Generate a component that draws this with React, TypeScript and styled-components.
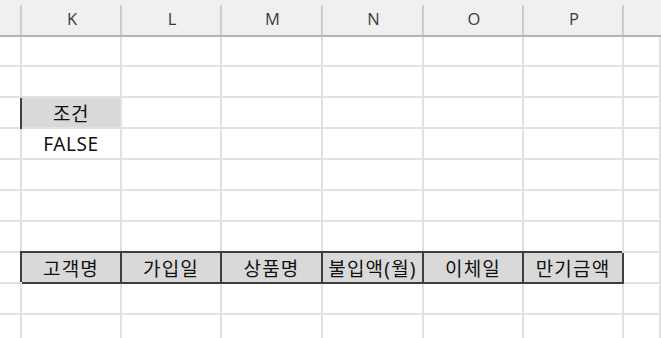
import React from "react";
import styled, { createGlobalStyle, css } from "styled-components";

const GlobalStyle = createGlobalStyle`
  html, body {
    margin: 0;
    padding: 0;
    background: #ffffff;
    overflow: hidden;
  }
  #root {
    width: 661px;
    height: 338px;
    overflow: hidden;
  }
`;

const COLS = ["", "K", "L", "M", "N", "O", "P", ""];
const GRID = "#e1e1e1";
const DARK = "#3f3f3f";
const FILL = "#d9d9d9";

const Sheet = styled.div`
  display: grid;
  grid-template-columns: 22px 100px 100px 101px 101px 100px 100px 1fr;
  grid-template-rows: 37px 30px repeat(9, 31px);
  width: 661px;
  font-family: "Noto Sans", "Noto Sans CJK KR", sans-serif;
`;

const ColHeader = styled.div<{ $edge?: boolean }>`
  position: relative;
  display: flex;
  align-items: center;
  justify-content: center;
  background: #f0f0f0;
  border-bottom: 2px solid #b4b4b4;
  color: #3a3a3a;
  font-family: "Open Sans", "Noto Sans", sans-serif;
  font-size: 16.5px;
  padding-top: 1px;
  &::after {
    content: "";
    position: absolute;
    right: 0;
    top: 5px;
    bottom: 0;
    width: 2px;
    background: linear-gradient(to right, #c2c2c2, #d6d6d6);
    display: ${(p) => (p.$edge ? "none" : "block")};
  }
`;

type Tone = "plain" | "label" | "head";

const Cell = styled.div<{ $tone: Tone }>`
  display: flex;
  align-items: center;
  justify-content: center;
  border-right: 2px solid ${GRID};
  border-bottom: 2px solid ${GRID};
  color: #111111;
  font-size: 19px;
  letter-spacing: 0.6px;
  white-space: nowrap;
  overflow: visible;
  ${(p) =>
    p.$tone === "label" &&
    css`
      background: ${FILL};
      box-shadow: -2px 0 0 ${DARK};
    `}
  ${(p) =>
    p.$tone === "head" &&
    css`
      background: ${FILL};
      letter-spacing: 1.2px;
      border-right-color: ${DARK};
      border-bottom-color: ${DARK};
      box-shadow: -2px -2px 0 ${DARK};
    `}
`;

type CellData = { text: string; tone: Tone };

const rows: Record<number, Record<number, CellData>> = {
  2: { 1: { text: "조건", tone: "label" } },
  3: { 1: { text: "FALSE", tone: "plain" } },
  7: {
    1: { text: "고객명", tone: "head" },
    2: { text: "가입일", tone: "head" },
    3: { text: "상품명", tone: "head" },
    4: { text: "불입액(월)", tone: "head" },
    5: { text: "이체일", tone: "head" },
    6: { text: "만기금액", tone: "head" },
  },
};

export default function App() {
  const body: React.ReactNode[] = [];
  for (let r = 0; r < 10; r++) {
    for (let c = 0; c < COLS.length; c++) {
      const d = rows[r]?.[c];
      body.push(
        <Cell key={`${r}-${c}`} $tone={d ? d.tone : "plain"}>
          {d ? d.text : null}
        </Cell>
      );
    }
  }
  return (
    <>
      <GlobalStyle />
      <Sheet>
        {COLS.map((c, i) => (
          <ColHeader key={`h${i}`} $edge={i === COLS.length - 1}>
            {c}
          </ColHeader>
        ))}
        {body}
      </Sheet>
    </>
  );
}
